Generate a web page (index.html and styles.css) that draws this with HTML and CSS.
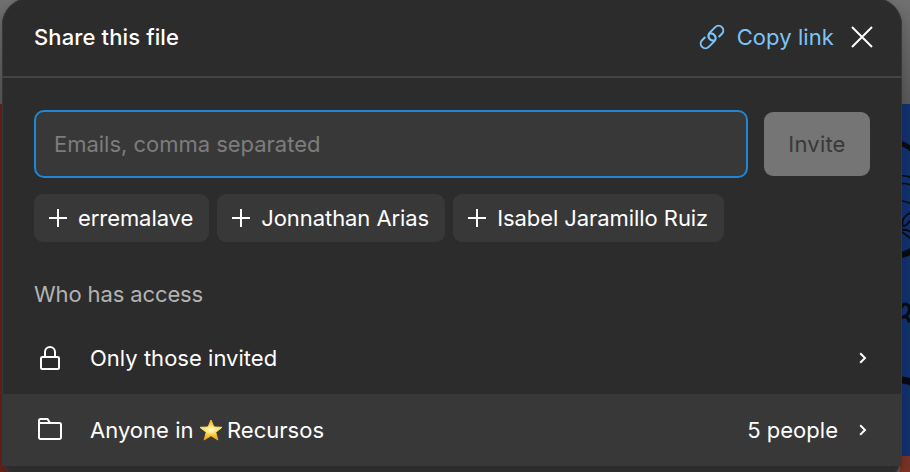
FILE: index.html
```html
<!DOCTYPE html>
<html lang="en">

<head>
  <meta charset="UTF-8">
  <meta name="viewport" content="width=device-width, initial-scale=1.0">
  <title>Share this file</title>
  <link rel="stylesheet" href="styles.css">
</head>

<body>
  <!-- canvas behind the dialog -->
  <div class="canvas">
    <div class="canvas-left"></div>
    <div class="canvas-right">
      <svg class="doodle" width="10" height="352" viewBox="0 0 10 352" fill="none" stroke="#090b12">
        <path d="M-1 39.500Q5 41 11 47" stroke-width="5" />
        <path d="M-1 72Q5 71 11 75M-1 80Q5 78 11 83M-1 97Q5 97 11 101" stroke-width="1.500" />
        <path d="M0 121C0 113 7 108 11 109M0 121C4 125 8 115 11 114M-1 126Q5 125 11 129M0 128Q5 131 11 137" stroke-width="2" />
        <path d="M-1 151Q5 150 11 146" stroke-width="6" />
        <path d="M-1 204Q2 198 6 201C9 205 7 211 2 213M-1 214Q5 210 7 217H11M7 203L11 201" stroke-width="3" />
        <path d="M-1 276Q5 276 11 279" stroke-width="7" />
      </svg>
    </div>
  </div>

  <div class="modal">
    <div class="modal-header">
      <h1>Share this file</h1>
      <a class="copy-link" href="#">
        <svg width="26" height="26" viewBox="-13 -13 26 26" fill="none" stroke="#7cc4f8" stroke-width="2" stroke-linecap="round">
          <g transform="rotate(-45)">
            <path d="M5.500 4.700H9.300A4.700 4.700 0 0 0 9.300 -4.700H1.500A4.700 4.700 0 0 0 -0.500 4.200" />
            <path d="M-5.500 -4.700H-9.300A4.700 4.700 0 0 0 -9.300 4.700H-1.500A4.700 4.700 0 0 0 0.500 -4.200" />
          </g>
        </svg>
        Copy link
      </a>
      <button class="close" aria-label="Close">
        <svg width="22" height="22" viewBox="0 0 22 22" stroke="#fff" stroke-width="2">
          <path d="M1 1L21 21M21 1L1 21" />
        </svg>
      </button>
    </div>

    <div class="invite">
      <div class="invite-row">
        <input type="text" placeholder="Emails, comma separated">
        <button class="invite-btn">Invite</button>
      </div>
      <div class="suggestions">
        <button class="chip"><svg width="18" height="18" viewBox="0 0 18 18" stroke="#fff" stroke-width="2"><path d="M9 0V18M0 9H18" /></svg>erremalave</button>
        <button class="chip"><svg width="18" height="18" viewBox="0 0 18 18" stroke="#fff" stroke-width="2"><path d="M9 0V18M0 9H18" /></svg>Jonnathan Arias</button>
        <button class="chip"><svg width="18" height="18" viewBox="0 0 18 18" stroke="#fff" stroke-width="2"><path d="M9 0V18M0 9H18" /></svg>Isabel Jaramillo Ruiz</button>
      </div>
    </div>

    <h2>Who has access</h2>
    <div class="access-row">
      <svg class="access-icon" width="32" height="32" viewBox="0 0 32 32" fill="none" stroke="#fff" stroke-width="2">
        <rect x="7" y="15" width="18" height="12" rx="1.500" />
        <path d="M11 15V10a5 5 0 0 1 10 0V15" />
      </svg>
      <span class="access-name">Only those invited</span>
      <svg class="chevron" width="8" height="12" viewBox="0 0 8 12" fill="none" stroke="#fff" stroke-width="2">
        <path d="M1.200 1.200L6 6L1.200 10.800" />
      </svg>
    </div>
    <div class="access-row active">
      <svg class="access-icon" width="32" height="32" viewBox="0 0 32 32" fill="none" stroke="#fff" stroke-width="2">
        <path d="M5 9V6.500A1.500 1.500 0 0 1 6.500 5H13.500L16 9H25.500A1.500 1.500 0 0 1 27 10.500V23.500A1.500 1.500 0 0 1 25.500 25H6.500A1.500 1.500 0 0 1 5 23.500V9H16" />
      </svg>
      <span class="access-name">Anyone in
        <svg class="star" width="24" height="22" viewBox="0 0 24 22">
          <defs>
            <linearGradient id="gold" x1="0" y1="0" x2="0" y2="1">
              <stop offset="0" stop-color="#f6b52c" />
              <stop offset="0.450" stop-color="#ffe877" />
              <stop offset="0.650" stop-color="#ffd94a" />
              <stop offset="1" stop-color="#e99a12" />
            </linearGradient>
            <radialGradient id="shine">
              <stop offset="0" stop-color="#fffbe0" />
              <stop offset="1" stop-color="#fff3a0" stop-opacity="0" />
            </radialGradient>
          </defs>
          <path d="M12 1L14.900 8L23 8.300L16.700 13.300L18.900 21L12 16.700L5.100 21L7.300 13.300L1 8.300L9.100 8Z" fill="url(#gold)" stroke="url(#gold)" stroke-linejoin="round" />
          <ellipse cx="12" cy="11" rx="7" ry="5" fill="url(#shine)" />
        </svg>
        Recursos</span>
      <span class="access-count">5 people</span>
      <svg class="chevron" width="8" height="12" viewBox="0 0 8 12" fill="none" stroke="#fff" stroke-width="2">
        <path d="M1.200 1.200L6 6L1.200 10.800" />
      </svg>
    </div>
  </div>
</body>

</html>
```

FILE: styles.css
```css
* {
  margin: 0;
  padding: 0;
  box-sizing: border-box;
}

body {
  position: relative;
  height: 472px;
  overflow: hidden;
  background: #686868;
  color: #fff;
  font-family: 'Inter', sans-serif;
  font-size: 22px;
  line-height: 32px;
  letter-spacing: 0.02px;
}

button,
input {
  border: 0;
  font: inherit;
  letter-spacing: inherit;
  color: inherit;
}

svg {
  flex-shrink: 0;
}

.canvas {
  position: absolute;
  inset: 0;
  display: flex;
  justify-content: space-between;
  padding-top: 104px;
  background: linear-gradient(#707070, #585858 104px);
}

.canvas-left {
  width: 10px;
  background: #642219;
}

.canvas-right {
  width: 10px;
  background: linear-gradient(#123170 352px, #7a3324 352px);
}

.doodle {
  display: block;
  margin-left: 2px;
}

.modal {
  position: relative;
  width: 900px;
  height: 484px;
  margin: -2px 0 0 2px;
  background: #2c2c2c;
  border-radius: 27px;
  box-shadow: inset 0 0 0 1px #383838, 0 4px 12px rgba(0, 0, 0, 0.2);
}

.modal-header {
  display: flex;
  align-items: center;
  height: 80px;
  padding: 2px 29px 2px 32px;
  border-bottom: 2px solid #444;
}

h1 {
  flex: 1;
  font-size: 22px;
  font-weight: 500;
  letter-spacing: 0.12px;
}

.copy-link {
  display: flex;
  align-items: center;
  gap: 12px;
  color: #7cc4f8;
  letter-spacing: 0.08px;
  text-decoration: none;
}

.close {
  display: flex;
  margin-left: 17px;
  background: none;
}

.invite {
  padding: 32px;
}

.invite-row {
  display: flex;
  align-items: center;
  gap: 16px;
}

.invite-row input {
  flex: 1;
  height: 68px;
  padding: 0 18px;
  background: #383838;
  border: 2px solid #1f87d6;
  border-radius: 10px;
  outline: none;
  letter-spacing: -0.02px;
}

.invite-row input::placeholder {
  color: #7d7d7d;
}

.invite-btn {
  width: 106px;
  height: 64px;
  background: #757575;
  border-radius: 9px;
  color: #383838;
  letter-spacing: 0.2px;
}

.suggestions {
  display: flex;
  gap: 8px;
  margin-top: 16px;
}

.chip {
  display: flex;
  align-items: center;
  gap: 11px;
  height: 48px;
  padding: 0 16px 0 15px;
  background: #383838;
  border-radius: 9px;
  letter-spacing: -0.07px;
}

h2 {
  padding: 4px 32px 12px;
  font-size: 22px;
  font-weight: 400;
  letter-spacing: -0.12px;
  color: #b3b3b3;
}

.access-row {
  display: flex;
  align-items: center;
  height: 72px;
  padding: 0 35px 0 32px;
}

.access-row.active {
  background: #383838;
}

.access-name {
  flex: 1;
  margin-left: 24px;
}

.star {
  margin: 0 -2px 0 -1px;
  vertical-align: -3px;
}

.chevron {
  margin-left: 21px;
}
```
